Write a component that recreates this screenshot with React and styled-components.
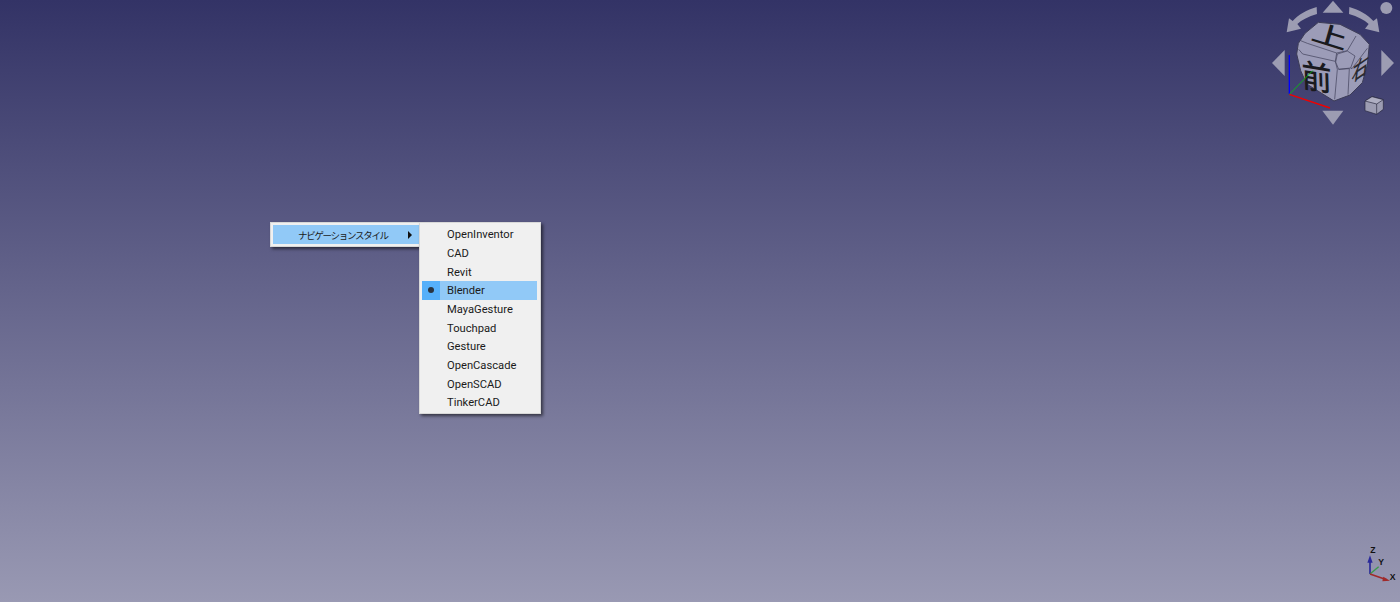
import React from 'react';
import styled, { createGlobalStyle } from 'styled-components';

const GlobalStyle = createGlobalStyle`
  html, body {
    margin: 0;
    height: 100%;
    overflow: hidden;
  }
  #root {
    height: 100%;
  }
`;

const Viewport = styled.div`
  position: relative;
  width: 100%;
  height: 100%;
  background: linear-gradient(to bottom, #333366 0%, #9999b3 100%);
  font-family: 'Roboto', 'Noto Sans CJK JP', sans-serif;
  font-size: 11.2px;
  color: #1b1b1b;
`;

const Menu = styled.div`
  position: absolute;
  box-sizing: border-box;
  padding: 2px;
  background: #f0f0f0;
  border: 1px solid #d8d8d8;
  box-shadow: 2px 2px 3px rgba(0, 0, 0, 0.55);
`;

const ParentMenu = styled(Menu)`
  left: 270px;
  top: 222px;
  width: 152px;
  height: 25px;
`;

const SubMenu = styled(Menu)`
  left: 419px;
  top: 222px;
  width: 122px;
  height: 192px;
  padding-right: 3px;
  display: flex;
  flex-direction: column;
`;

const Row = styled.div`
  flex: none;
  display: flex;
  align-items: center;
  height: 18.67px;
  white-space: nowrap;
  background: ${(p) => (p.$active ? '#91c9f7' : 'transparent')};
`;

const ParentRow = styled(Row)`
  height: 19px;
  padding-left: 25px;
  font-family: 'Noto Sans CJK JP', sans-serif;
  font-size: 9.5px;
  letter-spacing: -1.3px;
`;

const Label = styled.span`
  padding-top: 1px;
`;

const Arrow = styled.span`
  margin-left: 20px;
  width: 0;
  height: 0;
  border-left: 4px solid #111;
  border-top: 4px solid transparent;
  border-bottom: 4px solid transparent;
`;

const Check = styled.span`
  flex: none;
  display: flex;
  align-items: center;
  justify-content: center;
  width: 17.5px;
  height: 100%;
  margin-right: 7.5px;
  background: ${(p) => (p.$on ? '#56b0fa' : 'transparent')};

  &::after {
    content: '';
    display: ${(p) => (p.$on ? 'block' : 'none')};
    width: 6px;
    height: 6px;
    border-radius: 50%;
    background: #2a3440;
  }
`;

const Cube = styled.svg`
  position: absolute;
  left: 1260px;
  top: 0;
  width: 140px;
  height: 130px;
`;

const Triad = styled.svg`
  position: absolute;
  left: 1350px;
  top: 540px;
  width: 50px;
  height: 50px;
`;

const styles = ['OpenInventor', 'CAD', 'Revit', 'Blender', 'MayaGesture', 'Touchpad', 'Gesture', 'OpenCascade', 'OpenSCAD', 'TinkerCAD'];

const control = '#9c9cb2';
const face = '#9c9cb8';
const edge = '#3c3c56';

function NaviCube() {
  return (
    <Cube viewBox="0 0 420 390">
      <g fill={control}>
        <polygon points="188,38 250,38 219,2" />
        <polygon points="187,332 250,332 219,374" />
        <polygon points="74,150 74,228 36,189" />
        <polygon points="364,150 364,228 402,189" />
        <path d="M170 21 L171 42 C145 50 125 60 112 72 L123 86 L80 97 L87 55 L98 63 C115 44 140 30 170 21 Z" />
        <path d="M268 21 L267 42 C293 50 313 60 326 72 L315 86 L358 97 L351 55 L340 63 C323 44 298 30 268 21 Z" />
        <circle cx="379" cy="24" r="18" />
      </g>
      <polygon
        points="175,67 240,73 300,103 328,133 322,195 307,248 270,285 222,303 140,252 122,212 110,162 115,130 135,100"
        fill={face}
        stroke={edge}
        strokeWidth="3"
      />
      <g fill={face} stroke={edge} strokeWidth="2" strokeLinejoin="round">
        <polyline points="122,122 142,130 230,159 262,152 288,108" fill="none" />
        <polyline points="116,148 128,162 226,184 232,208 224,298" fill="none" />
        <polyline points="230,159 226,184" fill="none" />
        <polygon points="232,162 262,153 285,168 272,204 236,208 227,186" />
        <polyline points="236,208 268,206 264,284" fill="none" />
        <polyline points="272,204 276,206 322,145" fill="none" />
      </g>
      <g fill="#1a1a1e" fontFamily="'Noto Sans CJK JP', sans-serif" fontSize="100" fontWeight="500">
        <text transform="matrix(1.05 0.33 -0.2 0.7 150 118)">上</text>
        <text transform="matrix(0.9 0.15 0.03 0.98 126 260)">前</text>
        <text transform="matrix(0.5 -0.34 -0.1 0.72 272 250)" fill="#2a2a30">右</text>
      </g>
      <line x1="88" y1="283" x2="88" y2="165" stroke="#0000ff" strokeWidth="4" />
      <line x1="88" y1="283" x2="158" y2="212" stroke="#00d000" strokeWidth="2.5" />
      <line x1="88" y1="283" x2="210" y2="324" stroke="#f00000" strokeWidth="4" />
      <g fill={control} stroke="#26263c" strokeWidth="2" strokeLinejoin="round">
        <polygon points="315,303 336,290 370,299 370,328 350,343 315,332" />
        <polygon points="315,303 336,290 370,299 350,312" fill="#aeaec2" />
        <line x1="350" y1="312" x2="350" y2="343" />
      </g>
    </Cube>
  );
}

function AxisTriad() {
  return (
    <Triad viewBox="0 0 150 150">
      <line x1="60" y1="102" x2="60" y2="60" stroke="#2a2a9a" strokeWidth="5" />
      <polygon points="52,68 68,68 60,46" fill="#2a2a9a" />
      <line x1="60" y1="102" x2="86" y2="80" stroke="#3a9a4a" strokeWidth="4" />
      <line x1="60" y1="102" x2="110" y2="119" stroke="#a02a2a" strokeWidth="5" />
      <polygon points="100,110 97,124 120,122" fill="#a02a2a" />
      <g fill="#111" fontFamily="'Liberation Sans', sans-serif" fontSize="26" fontWeight="700">
        <text x="61" y="40">Z</text>
        <text x="85" y="75">Y</text>
        <text x="119" y="120">X</text>
      </g>
    </Triad>
  );
}

export default function App() {
  return (
    <>
      <GlobalStyle />
      <Viewport>
        <NaviCube />
        <AxisTriad />
        <ParentMenu>
          <ParentRow $active>
            ナビゲーションスタイル
            <Arrow />
          </ParentRow>
        </ParentMenu>
        <SubMenu>
          {styles.map((name) => (
            <Row key={name} $active={name === 'Blender'}>
              <Check $on={name === 'Blender'} />
              <Label>{name}</Label>
            </Row>
          ))}
        </SubMenu>
      </Viewport>
    </>
  );
}
